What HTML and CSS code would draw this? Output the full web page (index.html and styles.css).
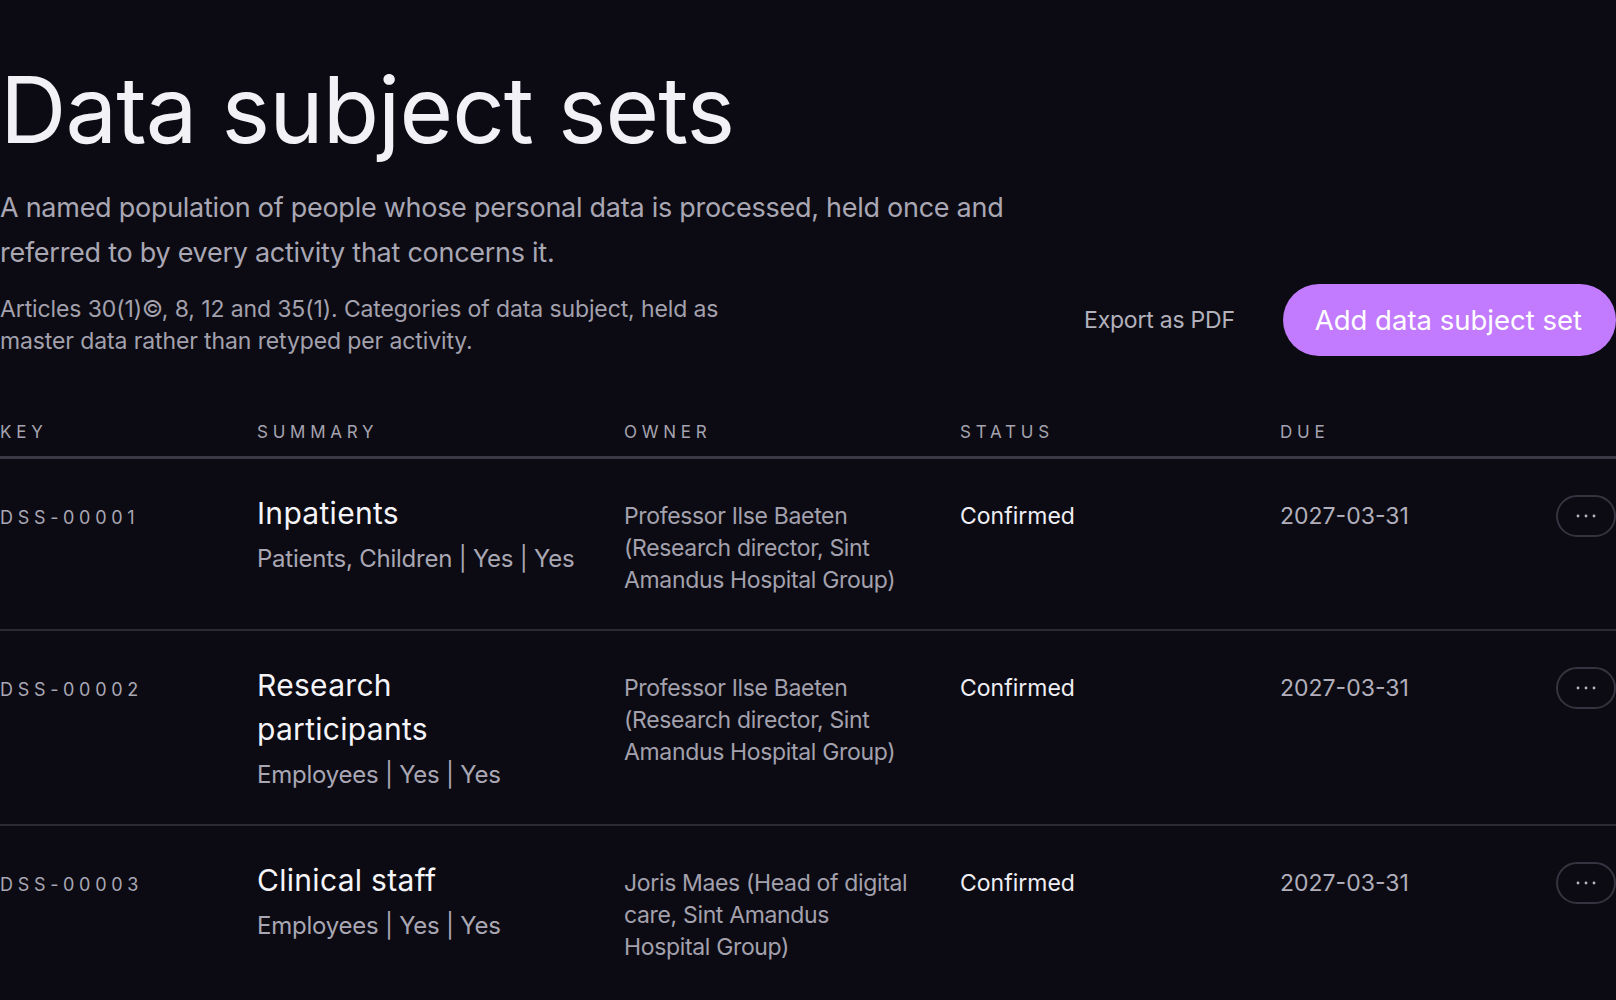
FILE: index.html
```html
<!DOCTYPE html>
<html lang="en">
<head>
<meta charset="utf-8">
<title>Data subject sets</title>
<link rel="stylesheet" href="styles.css">
</head>
<body>
<main class="page">
  <header class="page-head">
    <h1 class="title">Data subject sets</h1>
    <p class="lede">A named population of people whose personal data is processed, held once and referred to by every activity that concerns it.</p>
    <div class="meta-row">
      <p class="note">Articles 30(1)©, 8, 12 and 35(1). Categories of data subject, held as master data rather than retyped per activity.</p>
      <div class="actions">
        <button class="link-btn" type="button">Export as PDF</button>
        <button class="primary-btn" type="button">Add data subject set</button>
      </div>
    </div>
  </header>

  <section class="table">
    <div class="row head-row">
      <div class="th">Key</div>
      <div class="th">Summary</div>
      <div class="th">Owner</div>
      <div class="th">Status</div>
      <div class="th">Due</div>
      <div class="th"></div>
    </div>

    <div class="row">
      <div class="cell key">DSS-00001</div>
      <div class="cell summary">
        <div class="row-title">Inpatients</div>
        <div class="row-sub">Patients, Children | Yes | Yes</div>
      </div>
      <div class="cell owner">Professor Ilse Baeten (Research director, Sint Amandus Hospital Group)</div>
      <div class="cell status">Confirmed</div>
      <div class="cell due">2027-03-31</div>
      <div class="cell menu"><button class="menu-btn" type="button" aria-label="More"><svg width="20" height="4" viewBox="0 0 20 4"><circle cx="2" cy="2" r="1.4"/><circle cx="10" cy="2" r="1.4"/><circle cx="18" cy="2" r="1.4"/></svg></button></div>
    </div>

    <div class="row">
      <div class="cell key">DSS-00002</div>
      <div class="cell summary">
        <div class="row-title">Research participants</div>
        <div class="row-sub">Employees | Yes | Yes</div>
      </div>
      <div class="cell owner">Professor Ilse Baeten (Research director, Sint Amandus Hospital Group)</div>
      <div class="cell status">Confirmed</div>
      <div class="cell due">2027-03-31</div>
      <div class="cell menu"><button class="menu-btn" type="button" aria-label="More"><svg width="20" height="4" viewBox="0 0 20 4"><circle cx="2" cy="2" r="1.4"/><circle cx="10" cy="2" r="1.4"/><circle cx="18" cy="2" r="1.4"/></svg></button></div>
    </div>

    <div class="row">
      <div class="cell key">DSS-00003</div>
      <div class="cell summary">
        <div class="row-title">Clinical staff</div>
        <div class="row-sub">Employees | Yes | Yes</div>
      </div>
      <div class="cell owner">Joris Maes (Head of digital care, Sint Amandus Hospital Group)</div>
      <div class="cell status">Confirmed</div>
      <div class="cell due">2027-03-31</div>
      <div class="cell menu"><button class="menu-btn" type="button" aria-label="More"><svg width="20" height="4" viewBox="0 0 20 4"><circle cx="2" cy="2" r="1.4"/><circle cx="10" cy="2" r="1.4"/><circle cx="18" cy="2" r="1.4"/></svg></button></div>
    </div>
  </section>
</main>
</body>
</html>
```

FILE: styles.css
```css
* { box-sizing: border-box; }

html, body {
  margin: 0;
  padding: 0;
  background: #0c0b13;
}

body {
  font-family: Inter, "Noto Sans", "DejaVu Sans", sans-serif;
  color: #a9a7b3;
  overflow: hidden;
}

.page {
  width: 1616px;
}

.title {
  margin: 64px 0 0;
  font-size: 92px;
  line-height: 1;
  font-weight: 400;
  letter-spacing: -0.01em;
  color: #f2f1f6;
}

.lede {
  margin: 29px 0 0;
  max-width: 1040px;
  font-size: 27px;
  line-height: 45px;
  color: #a9a7b3;
  letter-spacing: -0.01em;
}

.meta-row {
  margin-top: 9px;
  display: flex;
  justify-content: space-between;
  align-items: flex-end;
}

.note {
  margin: 0 0 -1px;
  max-width: 745px;
  font-size: 23px;
  line-height: 32px;
  letter-spacing: -0.005em;
  color: #a3a1ad;
}

.actions {
  display: flex;
  align-items: center;
  gap: 48px;
}

.link-btn {
  background: none;
  border: 0;
  padding: 0;
  font: inherit;
  font-size: 23px;
  color: #b3b1bc;
  letter-spacing: -0.01em;
}

.primary-btn {
  height: 72px;
  padding: 0 34px 0 32px;
  border: 0;
  border-radius: 36px;
  background: #c27bfe;
  color: #ffffff;
  font: inherit;
  font-size: 27.5px;
  letter-spacing: 0;
}

.table {
  margin-top: 64px;
}

.row {
  display: grid;
  grid-template-columns: 257px 367px 336px 320px 1fr 60px;
  align-items: baseline;
  padding: 32px 0 33px;
  border-bottom: 2px solid #2b2a34;
}

.row:last-child {
  border-bottom: 0;
}

.head-row {
  padding: 0 0 12px;
  border-bottom: 3px solid #3b3946;
}

.th {
  font-size: 17px;
  line-height: 24px;
  letter-spacing: 0.28em;
  text-transform: uppercase;
  color: #a5a3af;
}

.key {
  font-size: 18px;
  letter-spacing: 0.26em;
  color: #a9a7b3;
}

.row-title {
  max-width: 280px;
  font-size: 30px;
  line-height: 44px;
  letter-spacing: 0.01em;
  color: #f5f4f8;
}

.row-sub {
  margin-top: 8px;
  font-size: 24px;
  line-height: 32px;
  color: #a9a7b3;
  letter-spacing: -0.01em;
}

.owner {
  max-width: 290px;
  font-size: 23px;
  line-height: 32px;
  letter-spacing: -0.015em;
  color: #a3a1ad;
}

.status {
  font-size: 23px;
  line-height: 32px;
  color: #efeef3;
}

.due {
  font-size: 23px;
  line-height: 32px;
  color: #b1afbb;
}

.menu {
  align-self: start;
  margin-top: 4px;
}

.menu-btn {
  width: 60px;
  height: 42px;
  padding: 0;
  border: 2px solid #35333f;
  border-radius: 21px;
  background: transparent;
  display: flex;
  align-items: center;
  justify-content: center;
  fill: #b9b6c2;
}
```
